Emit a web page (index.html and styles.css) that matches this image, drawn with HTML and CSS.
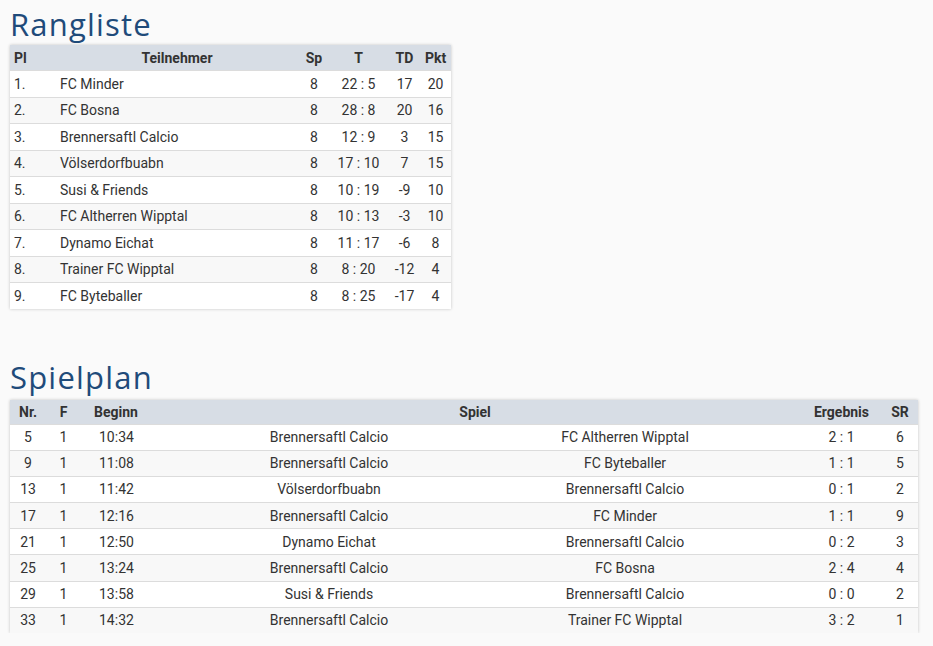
FILE: index.html
```html
<!DOCTYPE html>
<html lang="de">
<head>
<meta charset="utf-8">
<title>Rangliste</title>
<link rel="stylesheet" href="styles.css">
</head>
<body>
<section class="block">
  <h1 class="title">Rangliste</h1>
  <table class="tbl rank">
    <colgroup>
      <col class="c-pl"><col class="c-team"><col class="c-sp"><col class="c-t"><col class="c-td"><col class="c-pkt">
    </colgroup>
    <thead>
      <tr><th class="left">Pl</th><th>Teilnehmer</th><th>Sp</th><th>T</th><th>TD</th><th>Pkt</th></tr>
    </thead>
    <tbody>
      <tr><td class="left">1.</td><td class="name">FC Minder</td><td>8</td><td>22 : 5</td><td>17</td><td>20</td></tr>
      <tr><td class="left">2.</td><td class="name">FC Bosna</td><td>8</td><td>28 : 8</td><td>20</td><td>16</td></tr>
      <tr><td class="left">3.</td><td class="name">Brennersaftl Calcio</td><td>8</td><td>12 : 9</td><td>3</td><td>15</td></tr>
      <tr><td class="left">4.</td><td class="name">Völserdorfbuabn</td><td>8</td><td>17 : 10</td><td>7</td><td>15</td></tr>
      <tr><td class="left">5.</td><td class="name">Susi &amp; Friends</td><td>8</td><td>10 : 19</td><td>-9</td><td>10</td></tr>
      <tr><td class="left">6.</td><td class="name">FC Altherren Wipptal</td><td>8</td><td>10 : 13</td><td>-3</td><td>10</td></tr>
      <tr><td class="left">7.</td><td class="name">Dynamo Eichat</td><td>8</td><td>11 : 17</td><td>-6</td><td>8</td></tr>
      <tr><td class="left">8.</td><td class="name">Trainer FC Wipptal</td><td>8</td><td>8 : 20</td><td>-12</td><td>4</td></tr>
      <tr><td class="left">9.</td><td class="name">FC Byteballer</td><td>8</td><td>8 : 25</td><td>-17</td><td>4</td></tr>
    </tbody>
  </table>
</section>

<section class="block second">
  <h1 class="title">Spielplan</h1>
  <table class="tbl plan">
    <colgroup>
      <col class="p-nr"><col class="p-f"><col class="p-beg"><col class="p-t1"><col class="p-t2"><col class="p-erg"><col class="p-sr">
    </colgroup>
    <thead>
      <tr><th>Nr.</th><th>F</th><th class="beg-h">Beginn</th><th colspan="2">Spiel</th><th class="erg">Ergebnis</th><th>SR</th></tr>
    </thead>
    <tbody>
      <tr><td>5</td><td>1</td><td class="beg">10:34</td><td>Brennersaftl Calcio</td><td>FC Altherren Wipptal</td><td class="erg">2 : 1</td><td>6</td></tr>
      <tr><td>9</td><td>1</td><td class="beg">11:08</td><td>Brennersaftl Calcio</td><td>FC Byteballer</td><td class="erg">1 : 1</td><td>5</td></tr>
      <tr><td>13</td><td>1</td><td class="beg">11:42</td><td>Völserdorfbuabn</td><td>Brennersaftl Calcio</td><td class="erg">0 : 1</td><td>2</td></tr>
      <tr><td>17</td><td>1</td><td class="beg">12:16</td><td>Brennersaftl Calcio</td><td>FC Minder</td><td class="erg">1 : 1</td><td>9</td></tr>
      <tr><td>21</td><td>1</td><td class="beg">12:50</td><td>Dynamo Eichat</td><td>Brennersaftl Calcio</td><td class="erg">0 : 2</td><td>3</td></tr>
      <tr><td>25</td><td>1</td><td class="beg">13:24</td><td>Brennersaftl Calcio</td><td>FC Bosna</td><td class="erg">2 : 4</td><td>4</td></tr>
      <tr><td>29</td><td>1</td><td class="beg">13:58</td><td>Susi &amp; Friends</td><td>Brennersaftl Calcio</td><td class="erg">0 : 0</td><td>2</td></tr>
      <tr><td>33</td><td>1</td><td class="beg">14:32</td><td>Brennersaftl Calcio</td><td>Trainer FC Wipptal</td><td class="erg">3 : 2</td><td>1</td></tr>
    </tbody>
  </table>
</section>
</body>
</html>
```

FILE: styles.css
```css
html, body {
  margin: 0;
  padding: 0;
  background: #fafafa;
}
body {
  padding: 0 10px;
  font-family: Roboto, "Liberation Sans", sans-serif;
  font-size: 14px;
  color: #333;
}
.block {
  display: flex;
  flex-direction: column;
  align-items: flex-start;
}
.second {
  margin-top: 44px;
}
.title {
  margin: 0;
  height: 45px;
  padding-top: 6px;
  box-sizing: border-box;
  font-family: "Open Sans", "Liberation Sans", sans-serif;
  font-weight: 400;
  font-size: 31px;
  line-height: 36px;
  color: #1f4b7a;
  letter-spacing: 1.2px;
  white-space: nowrap;
}
.second .title { height: 47px; }
.tbl {
  border-collapse: collapse;
  table-layout: fixed;
  background: #fff;
  box-shadow: 0 0 3px rgba(0,0,0,0.22);
}
.tbl th {
  background: #d7dde5;
  font-weight: 700;
  color: #333;
  height: 25px;
  padding: 0;
  text-align: center;
}
.tbl td {
  padding: 0;
  text-align: center;
  border-top: 1px solid #dcdcdc;
}
.tbl tbody tr:nth-child(even) td {
  background: #f8f8f8;
}
.rank { width: 441px; }
.rank td { height: 25.5px; }
.rank .left { text-align: left; padding-left: 4px; }
.rank .name { text-align: left; padding-left: 6px; }
.c-pl { width: 44px; }
.c-team { width: 246px; }
.c-sp { width: 28px; }
.c-t { width: 61px; }
.c-td { width: 31px; }
.c-pkt { width: 31px; }

.plan { width: 908px; }
.plan th { height: 24px; }
.plan td { height: 25.2px; }
.p-nr { width: 36px; }
.p-f { width: 35px; }
.p-beg { width: 98px; }
.p-t1 { width: 300px; }
.p-t2 { width: 292px; }
.p-erg { width: 111px; }
.p-sr { width: 36px; }
.plan .beg-h { text-align: left; padding-left: 13px; }
.plan .beg { text-align: left; padding-left: 18px; }
.plan .erg { padding-left: 30px; }
```
